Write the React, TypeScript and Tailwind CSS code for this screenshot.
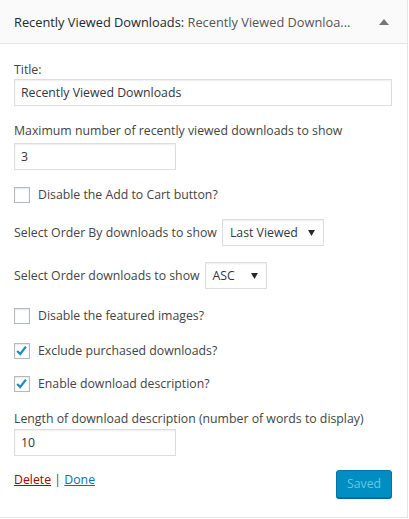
import React from "react";

const font = { fontFamily: '"Open Sans", "Noto Sans", sans-serif' };

function Check({ checked }: { checked?: boolean }) {
  return (
    <span className="relative inline-flex h-[16px] w-[16px] shrink-0 items-center justify-center border border-[#b4b9be] bg-white shadow-[inset_0_1px_2px_rgba(0,0,0,0.1)]">
      {checked && (
        <svg viewBox="0 0 16 16" className="h-[14px] w-[14px]">
          <polyline points="2.5,8 6,11.5 12.5,3" fill="none" stroke="#1e8cbe" strokeWidth="2.6" />
        </svg>
      )}
    </span>
  );
}

function CheckRow({ label, checked, className }: { label: string; checked?: boolean; className: string }) {
  return (
    <div className={`flex items-center gap-[8px] h-[18px] ${className}`}>
      <Check checked={checked} />
      <span>{label}</span>
    </div>
  );
}

function Select({ value, width }: { value: string; width: string }) {
  return (
    <div className={`flex h-[27px] items-center justify-between border border-[#ddd] bg-white pl-[7px] pr-[8px] shadow-[inset_0_1px_2px_rgba(0,0,0,0.07)] ${width}`}>
      <span className="text-[#32373c]">{value}</span>
      <svg viewBox="0 0 8 7" className="h-[6px] w-[7px]">
        <path d="M0 0 L8 0 L4 7 Z" fill="#23282d" />
      </svg>
    </div>
  );
}

export default function App() {
  return (
    <div className="bg-white" style={font}>
      <div className="w-[408px] h-[518px] border-r border-b border-[#e5e5e5] text-[12.3px] leading-[18px] text-[#444]">
        {/* header */}
        <div className="flex h-[44px] items-center justify-between border-b border-[#e5e5e5] bg-[#fafafa] pl-[14px] pr-[18px]">
          <div className="whitespace-nowrap text-[12.8px] text-[#23282d]">
            Recently Viewed Downloads: <span className="text-[#555]">Recently Viewed Downloa...</span>
          </div>
          <svg viewBox="0 0 10 6" className="h-[6px] w-[10px]">
            <path d="M0 6 L5 0 L10 6 Z" fill="#72777c" />
          </svg>
        </div>

        {/* body */}
        <div className="pl-[14px] pr-[15px] pt-[17px]">
          <div>Title:</div>
          <div className="flex h-[27px] items-center border border-[#ddd] px-[6px] text-[#32373c] shadow-[inset_0_1px_2px_rgba(0,0,0,0.07)]">
            Recently Viewed Downloads
          </div>

          <div className="mt-[16px]">Maximum number of recently viewed downloads to show</div>
          <div className="mt-[3px] flex h-[27px] w-[162px] items-center border border-[#ddd] px-[6px] text-[#32373c] shadow-[inset_0_1px_2px_rgba(0,0,0,0.07)]">
            3
          </div>

          <CheckRow className="mt-[16px]" label="Disable the Add to Cart button?" />

          <div className="mt-[15px] flex items-center gap-[5px]">
            <span>Select Order By downloads to show</span>
            <Select value="Last Viewed" width="w-[102px]" />
          </div>

          <div className="mt-[16px] flex items-center gap-[5px]">
            <span>Select Order downloads to show</span>
            <Select value="ASC" width="w-[62px]" />
          </div>

          <CheckRow className="mt-[18px]" label="Disable the featured images?" />
          <CheckRow className="mt-[17px]" label="Exclude purchased downloads?" checked />
          <CheckRow className="mt-[15px]" label="Enable download description?" checked />

          <div className="mt-[17px]">Length of download description (number of words to display)</div>
          <div className="mt-[1px] flex h-[27px] w-[162px] items-center border border-[#ddd] px-[6px] text-[#32373c] shadow-[inset_0_1px_2px_rgba(0,0,0,0.07)]">
            10
          </div>

          <div className="mt-[14px] flex items-start justify-between">
            <div className="pt-[1px]">
              <a className="text-[#a00] underline">Delete</a> | <a className="text-[#0073aa] underline">Done</a>
            </div>
            <button className="h-[28px] w-[56px] rounded-[3px] border border-[#0073aa] bg-[#008ec2] text-[#66c6e4] shadow-[0_1px_0_#006799]">
              Saved
            </button>
          </div>
        </div>
      </div>
    </div>
  );
}
